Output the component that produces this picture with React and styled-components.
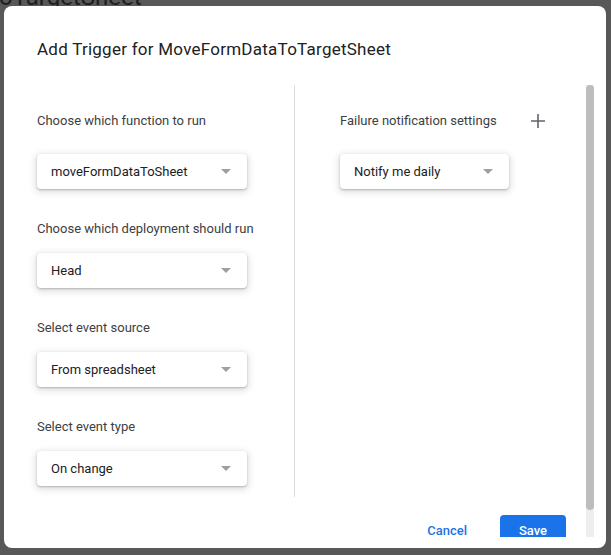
import React from "react";
import styled, { createGlobalStyle } from "styled-components";

const GlobalStyle = createGlobalStyle`
  html, body {
    margin: 0;
    padding: 0;
    background: #585858;
    font-family: Roboto, "Liberation Sans", Arial, sans-serif;
  }
`;

const Page = styled.div`
  position: relative;
  width: 611px;
  height: 555px;
  overflow: hidden;
  background: #585858;
`;

// the sheet title of the page behind the dimmed overlay
const BehindTitle = styled.div`
  margin-top: -15px;
  margin-left: -1px;
  font-size: 24px;
  line-height: 24px;
  color: #1e1e1e;
  white-space: nowrap;
`;

const Dialog = styled.div`
  position: absolute;
  top: 6px;
  left: 4px;
  width: 602px;
  height: 542px;
  background: #fff;
  border-radius: 8px;
  display: flex;
  flex-direction: column;
  overflow: hidden;
`;

const Title = styled.h2`
  margin: 0;
  padding: 31px 0 0 33px;
  height: 48px;
  font-size: 17px;
  font-weight: 400;
  line-height: 24px;
  color: #202124;
  letter-spacing: 0.25px;
`;

const ScrollArea = styled.div`
  display: flex;
  height: 452px;
`;

const Content = styled.div`
  width: 582px;
  overflow: hidden;
`;

const Columns = styled.div`
  display: flex;
  height: 412px;
`;

const Column = styled.div`
  display: flex;
  flex-direction: column;
  padding: 16px 0 0 ${(p) => p.$left}px;
  width: ${(p) => p.$width}px;
  box-sizing: border-box;
  border-left: ${(p) => (p.$divider ? "1px solid #dadce0" : "none")};
`;

const HeaderRow = styled.div`
  display: flex;
  align-items: center;
  justify-content: space-between;
  height: 40px;
  margin-bottom: 13px;
  width: ${(p) => p.$width || "auto"};
`;

const Label = styled.div`
  font-size: 13px;
  line-height: 16px;
  color: #3c4043;
  margin: 32px 0 16px;
`;

const HeaderLabel = styled.div`
  font-size: 13px;
  line-height: 16px;
  color: #3c4043;
`;

const IconButton = styled.button`
  width: 40px;
  height: 40px;
  border: none;
  background: transparent;
  padding: 0;
  display: flex;
  align-items: center;
  justify-content: center;
  color: #5f6368;
`;

const Select = styled.div`
  display: flex;
  align-items: center;
  justify-content: space-between;
  width: ${(p) => p.$width}px;
  height: 35px;
  box-sizing: border-box;
  padding: 0 16px 0 14px;
  border-radius: 4px;
  background: #fff;
  box-shadow: 0 1px 2px rgba(60, 64, 67, 0.3), 0 2px 6px 2px rgba(60, 64, 67, 0.15);
  font-size: 13px;
  color: #202124;
`;

const Caret = styled.span`
  width: 0;
  height: 0;
  border-left: 5px solid transparent;
  border-right: 5px solid transparent;
  border-top: 5px solid #9aa0a6;
`;

const Footer = styled.div`
  display: flex;
  justify-content: flex-end;
  align-items: flex-start;
  gap: 17px;
  padding: 18px 20px 0 0;
`;

const TextButton = styled.button`
  height: 30px;
  padding: 0 16px;
  border: none;
  background: transparent;
  color: #1a73e8;
  font-family: inherit;
  font-size: 13px;
  font-weight: 500;
`;

const PrimaryButton = styled(TextButton)`
  width: 66px;
  padding: 0;
  background: #1a73e8;
  color: #fff;
  border-radius: 4px;
`;

const Scrollbar = styled.div`
  width: 8px;
  background: #eeeeee;
  display: flex;
  flex-direction: column;
`;

const Thumb = styled.div`
  height: 425px;
  border-radius: 4px;
  background: #bdbdbd;
`;

const fields = [
  { label: "Choose which deployment should run", value: "Head" },
  { label: "Select event source", value: "From spreadsheet" },
  { label: "Select event type", value: "On change" },
];

export default function App() {
  return (
    <Page>
      <GlobalStyle />
      <BehindTitle>oTargetSheet</BehindTitle>
      <Dialog>
        <Title>Add Trigger for MoveFormDataToTargetSheet</Title>
        <ScrollArea>
          <Content>
            <Columns>
              <Column $left={33} $width={290}>
                <HeaderRow>
                  <HeaderLabel>Choose which function to run</HeaderLabel>
                </HeaderRow>
                <Select $width={210}>
                  moveFormDataToSheet
                  <Caret />
                </Select>
                {fields.map((f) => (
                  <React.Fragment key={f.label}>
                    <Label>{f.label}</Label>
                    <Select $width={210}>
                      {f.value}
                      <Caret />
                    </Select>
                  </React.Fragment>
                ))}
              </Column>
              <Column $left={45} $width={292} $divider>
                <HeaderRow $width="218px">
                  <HeaderLabel>Failure notification settings</HeaderLabel>
                  <IconButton aria-label="Add">
                    <svg width="14" height="14" viewBox="0 0 14 14">
                      <path d="M7 0v14M0 7h14" stroke="#5f6368" strokeWidth="1.6" />
                    </svg>
                  </IconButton>
                </HeaderRow>
                <Select $width={169}>
                  Notify me daily
                  <Caret />
                </Select>
              </Column>
            </Columns>
            <Footer>
              <TextButton>Cancel</TextButton>
              <PrimaryButton>Save</PrimaryButton>
            </Footer>
          </Content>
          <Scrollbar>
            <Thumb />
          </Scrollbar>
        </ScrollArea>
      </Dialog>
    </Page>
  );
}
